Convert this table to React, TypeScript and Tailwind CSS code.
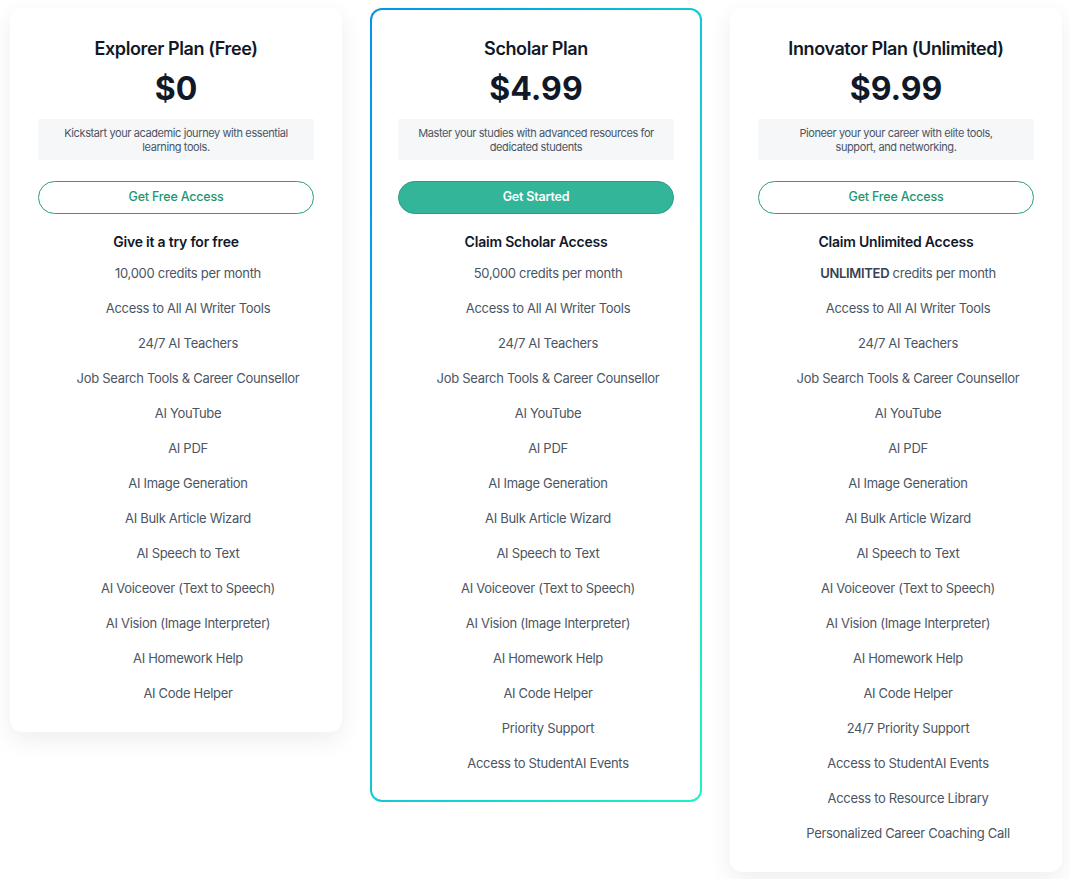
import React from 'react';

type Plan = {
  name: string;
  price: string;
  desc: React.ReactNode;
  cta: string;
  primary?: boolean;
  heading: string;
  features: React.ReactNode[];
};

const common = [
  'Access to All AI Writer Tools',
  '24/7 AI Teachers',
  'Job Search Tools & Career Counsellor',
  'AI YouTube',
  'AI PDF',
  'AI Image Generation',
  'AI Bulk Article Wizard',
  'AI Speech to Text',
  'AI Voiceover (Text to Speech)',
  'AI Vision (Image Interpreter)',
  'AI Homework Help',
  'AI Code Helper',
];

const plans: Plan[] = [
  {
    name: 'Explorer Plan (Free)',
    price: '$0',
    desc: (
      <>
        Kickstart your academic journey with essential
        <br />
        learning tools.
      </>
    ),
    cta: 'Get Free Access',
    heading: 'Give it a try for free',
    features: ['10,000 credits per month', ...common],
  },
  {
    name: 'Scholar Plan',
    price: '$4.99',
    desc: (
      <>
        Master your studies with advanced resources for
        <br />
        dedicated students
      </>
    ),
    cta: 'Get Started',
    primary: true,
    heading: 'Claim Scholar Access',
    features: ['50,000 credits per month', ...common, 'Priority Support', 'Access to StudentAI Events'],
  },
  {
    name: 'Innovator Plan (Unlimited)',
    price: '$9.99',
    desc: (
      <>
        Pioneer your your career with elite tools,
        <br />
        support, and networking.
      </>
    ),
    cta: 'Get Free Access',
    heading: 'Claim Unlimited Access',
    features: [
      <>
        <span className="font-semibold text-[#374151]">UNLIMITED</span> credits per month
      </>,
      ...common,
      '24/7 Priority Support',
      'Access to StudentAI Events',
      'Access to Resource Library',
      'Personalized Career Coaching Call',
    ],
  },
];

function CardBody({ plan }: { plan: Plan }) {
  return (
    <div
      className={
        plan.primary
          ? 'flex flex-col items-center px-[26px] pt-[25px] pb-[19px]'
          : 'flex flex-col items-center px-7 pt-[27px] pb-[21px]'
      }
    >
      <h2 className="text-[18px] leading-7 font-semibold text-[#111827] tracking-[-0.4px]">{plan.name}</h2>
      <div className="mt-[4px] text-[32px] leading-[44px] font-bold text-[#111827]">{plan.price}</div>
      <p className="mt-[8px] w-full bg-[#f6f7f9] px-2 pt-[7px] pb-[6px] text-center text-[11px] leading-[14px] text-[#4b5563] tracking-[-0.4px]">
        {plan.desc}
      </p>
      <button
        className={
          plan.primary
            ? 'mt-[21px] h-[33px] w-full rounded-full border border-[#2a9c80] bg-[#33b59a] text-[12.5px] font-semibold text-white tracking-[-0.2px]'
            : 'mt-[21px] h-[33px] w-full rounded-full border border-[#2a9c80] bg-white text-[12.5px] font-medium text-[#1f9670] tracking-[-0.2px]'
        }
      >
        {plan.cta}
      </button>
      <h3 className="mt-[18px] text-[14px] leading-5 font-semibold text-[#111827] tracking-[-0.2px]">{plan.heading}</h3>
      <ul className="mt-[4px] w-full pl-6">
        {plan.features.map((f, i) => (
          <li key={i} className="h-[35px] flex items-center justify-center text-[13px] text-[#4b5563] tracking-[-0.3px]">
            <span>{f}</span>
          </li>
        ))}
      </ul>
    </div>
  );
}

export default function App() {
  return (
    <div className="min-h-screen bg-white pt-2 pl-[10px] font-['Inter',sans-serif]">
      <div className="flex items-start gap-7">
        {plans.map((plan) =>
          plan.primary ? (
            <div
              key={plan.name}
              className="w-[332px] rounded-xl bg-gradient-to-br from-[#0892ea] via-[#12c8d4] to-[#1ff2c6] p-[2px]"
            >
              <div className="rounded-[10px] bg-white">
                <CardBody plan={plan} />
              </div>
            </div>
          ) : (
            <div
              key={plan.name}
              className="w-[332px] rounded-xl bg-white shadow-[0_8px_24px_rgba(0,0,0,0.07)]"
            >
              <CardBody plan={plan} />
            </div>
          )
        )}
      </div>
    </div>
  );
}
